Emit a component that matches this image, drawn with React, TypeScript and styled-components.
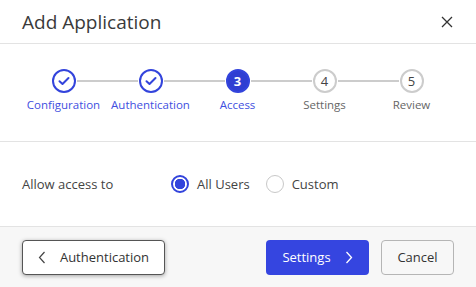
import styled, { createGlobalStyle } from 'styled-components';

const GlobalStyle = createGlobalStyle`
  html, body {
    margin: 0;
    padding: 0;
    background: #ffffff;
  }
  body {
    font-family: "Open Sans", "Noto Sans", sans-serif;
    color: #333333;
  }
`;

type StepState = 'done' | 'active' | 'todo';

interface StepData {
  label: string;
  state: StepState;
}

const steps: StepData[] = [
  { label: 'Configuration', state: 'done' },
  { label: 'Authentication', state: 'done' },
  { label: 'Access', state: 'active' },
  { label: 'Settings', state: 'todo' },
  { label: 'Review', state: 'todo' },
];

function App() {
  return (
    <>
      <GlobalStyle />
      <Dialog>
        <Header>
          <Title>Add Application</Title>
          <CloseButton aria-label="Close">
            <svg width="12" height="12" viewBox="0 0 12 12">
              <path d="M1 1 L11 11 M11 1 L1 11" stroke="#333" strokeWidth="1.3" fill="none" />
            </svg>
          </CloseButton>
        </Header>

        <Stepper>
          {steps.map((step, i) => (
            <Step key={step.label} last={i === steps.length - 1}>
              <Circle state={step.state}>
                {step.state === 'done' ? (
                  <svg width="12" height="10" viewBox="0 0 12 10">
                    <path d="M1.5 5.2 L4.5 8 L10.5 2" stroke="#3344dc" strokeWidth="2" fill="none" strokeLinecap="round" strokeLinejoin="round" />
                  </svg>
                ) : (
                  i + 1
                )}
              </Circle>
              <StepLabel state={step.state}>{step.label}</StepLabel>
            </Step>
          ))}
        </Stepper>

        <Body>
          <FieldLabel>Allow access to</FieldLabel>
          <RadioGroup>
            <RadioOption>
              <Radio checked />
              All Users
            </RadioOption>
            <RadioOption>
              <Radio />
              Custom
            </RadioOption>
          </RadioGroup>
        </Body>

        <Footer>
          <BackButton>
            <svg width="8" height="13" viewBox="0 0 8 13">
              <path d="M6.5 1 L1.5 6.5 L6.5 12" stroke="#444" strokeWidth="1.2" fill="none" />
            </svg>
            Authentication
          </BackButton>
          <Actions>
            <PrimaryButton>
              Settings
              <svg width="8" height="13" viewBox="0 0 8 13">
                <path d="M1.5 1 L6.5 6.5 L1.5 12" stroke="#fff" strokeWidth="1.3" fill="none" />
              </svg>
            </PrimaryButton>
            <SecondaryButton>Cancel</SecondaryButton>
          </Actions>
        </Footer>
      </Dialog>
    </>
  );
}

export default App;

const Dialog = styled.div`
  width: 476px;
  height: 287px;
  display: flex;
  flex-direction: column;
  background: #ffffff;
`;

const Header = styled.div`
  height: 43px;
  display: flex;
  align-items: center;
  justify-content: space-between;
  padding: 0 23px 0 22px;
  border-bottom: 1px solid #e3e3e3;
`;

const Title = styled.h1`
  margin: 0;
  font-size: 19px;
  font-weight: 400;
  color: #3a3a3a;
`;

const CloseButton = styled.button`
  border: none;
  background: none;
  padding: 0;
  display: flex;
  cursor: pointer;
`;

const Stepper = styled.div`
  display: flex;
  padding: 25px 20px 0 20px;
  height: 72px;
  border-bottom: 1px solid #e3e3e3;
`;

const Step = styled.div<{ last?: boolean }>`
  position: relative;
  width: 87px;
  display: flex;
  flex-direction: column;
  align-items: center;
  gap: 4px;

  &::after {
    content: '';
    display: ${(p) => (p.last ? 'none' : 'block')};
    position: absolute;
    top: 11px;
    left: calc(50% + 13px);
    width: 61px;
    height: 2px;
    background: #cccccc;
  }
`;

const Circle = styled.div<{ state: StepState }>`
  width: 24px;
  height: 24px;
  box-sizing: border-box;
  border-radius: 50%;
  display: flex;
  align-items: center;
  justify-content: center;
  font-size: 13px;
  font-weight: ${(p) => (p.state === 'active' ? 700 : 400)};
  border: 2px solid ${(p) => (p.state === 'todo' ? '#cccccc' : '#3344dc')};
  background: ${(p) => (p.state === 'active' ? '#2f3ed2' : '#ffffff')};
  color: ${(p) => (p.state === 'active' ? '#ffffff' : '#444444')};
`;

const StepLabel = styled.span<{ state: StepState }>`
  font-size: 11.5px;
  white-space: nowrap;
  color: ${(p) => (p.state === 'todo' ? '#666666' : '#3f4fe0')};
`;

const Body = styled.div`
  height: 84px;
  display: flex;
  align-items: center;
  padding: 0 22px;
  border-bottom: 1px solid #e3e3e3;
`;

const FieldLabel = styled.span`
  width: 149px;
  font-size: 13px;
  color: #444444;
`;

const RadioGroup = styled.div`
  display: flex;
  align-items: center;
  gap: 16px;
`;

const RadioOption = styled.label`
  display: flex;
  align-items: center;
  gap: 8px;
  font-size: 13px;
  color: #444444;
`;

const Radio = styled.span<{ checked?: boolean }>`
  width: 18px;
  height: 18px;
  box-sizing: border-box;
  border-radius: 50%;
  border: ${(p) => (p.checked ? '2px solid #3344dc' : '1px solid #c8c8c8')};
  background: ${(p) => (p.checked ? 'radial-gradient(circle, #3344dc 0 5px, #fff 5.5px)' : '#fff')};
`;

const Footer = styled.div`
  flex: 1;
  display: flex;
  align-items: center;
  justify-content: space-between;
  padding: 0 22px;
  background: #f7f7f7;
`;

const Actions = styled.div`
  display: flex;
  gap: 12px;
`;

const BaseButton = styled.button`
  height: 35px;
  box-sizing: border-box;
  border-radius: 4px;
  font-family: "Open Sans", "Noto Sans", sans-serif;
  font-size: 13px;
  display: flex;
  align-items: center;
  justify-content: center;
  cursor: pointer;
`;

const BackButton = styled(BaseButton)`
  width: 143px;
  gap: 14px;
  padding: 0 14px;
  background: #ffffff;
  color: #333333;
  border: 1px solid #555555;
  box-shadow: 0 1px 4px rgba(0, 0, 0, 0.35);
`;

const PrimaryButton = styled(BaseButton)`
  width: 103px;
  gap: 14px;
  background: #3545e0;
  color: #ffffff;
  border: none;
`;

const SecondaryButton = styled(BaseButton)`
  width: 73px;
  background: #f7f7f7;
  color: #333333;
  border: 1px solid #b5b5b5;
`;
